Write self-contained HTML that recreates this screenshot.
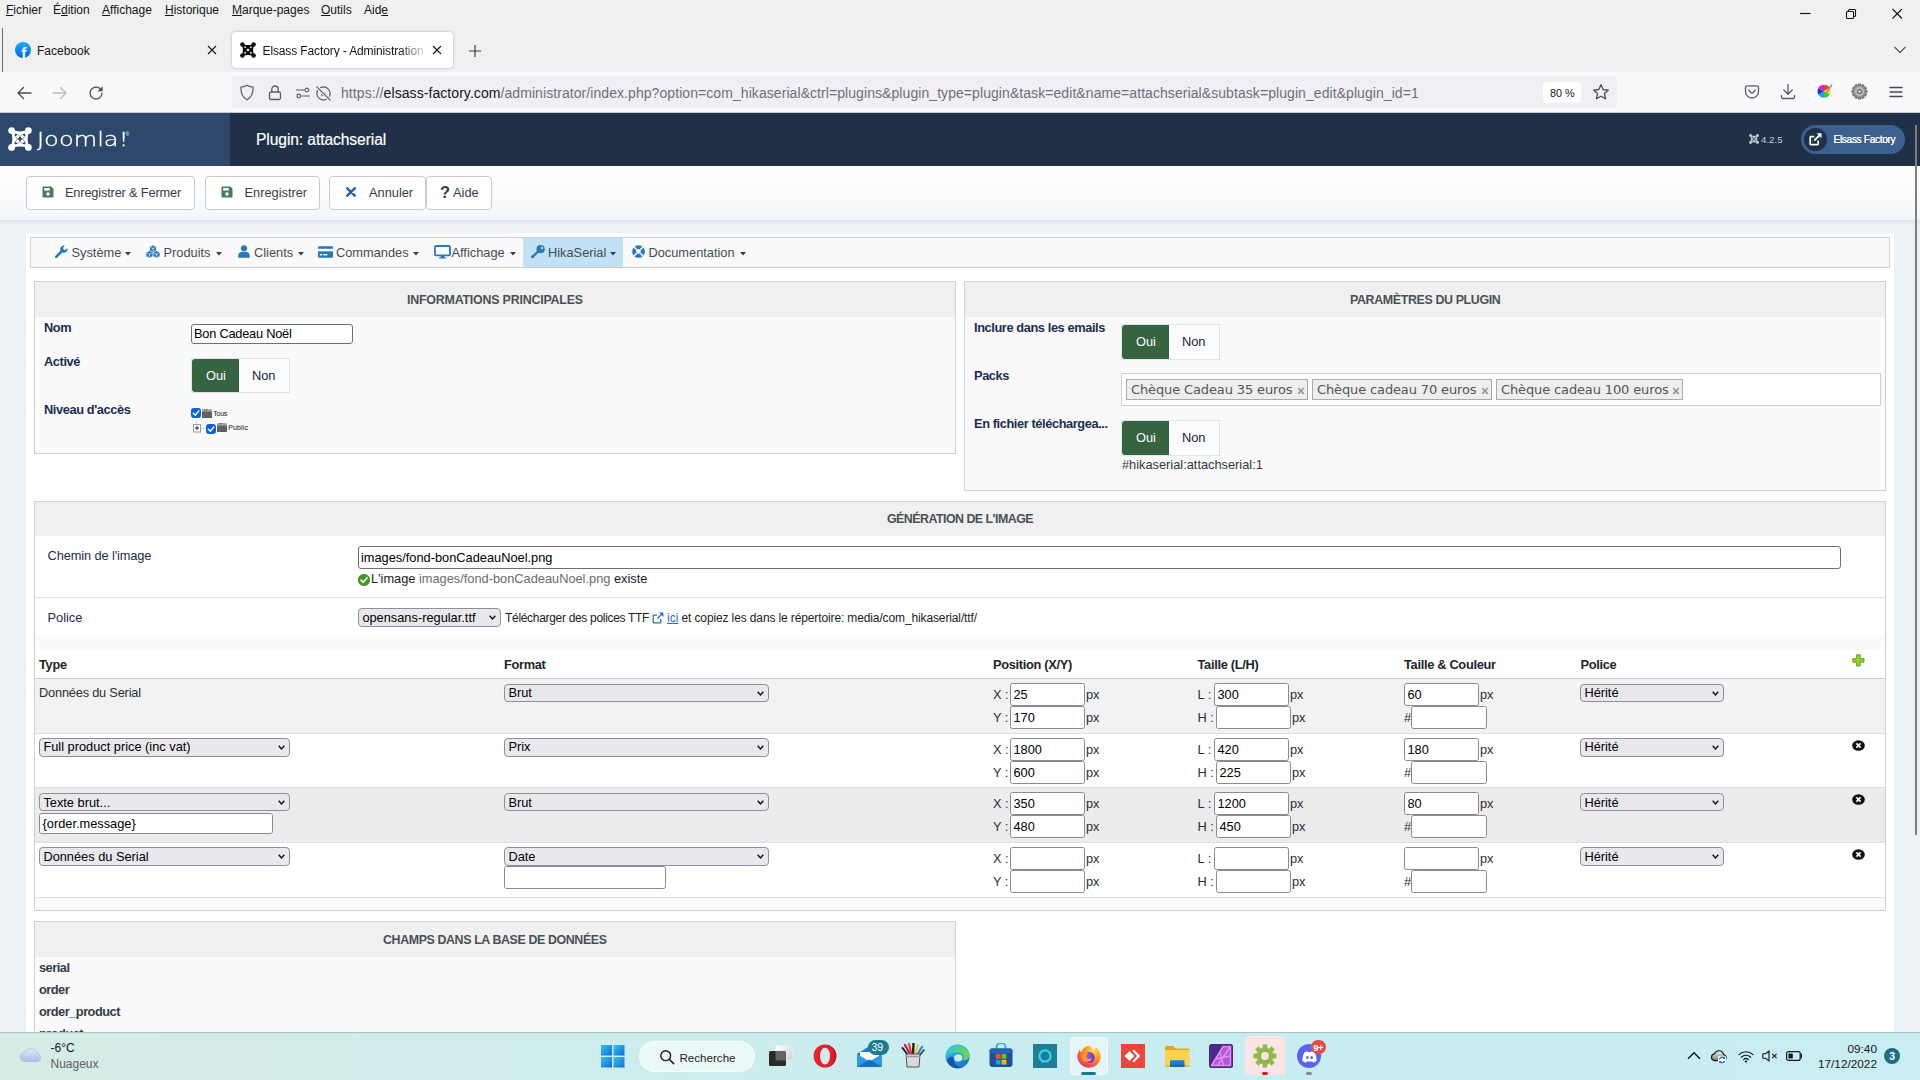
<!DOCTYPE html>
<html lang="fr"><head><meta charset="utf-8"><title>Elsass Factory - Administration</title>
<style>
*{box-sizing:border-box;margin:0;padding:0}
html,body{width:1920px;height:1080px;overflow:hidden;background:#fff}
body{position:relative;font-family:"Liberation Sans",sans-serif;font-size:12.8px;color:#212529}
.a{position:absolute;display:block}
.t{position:absolute;display:block;white-space:nowrap;line-height:1}
.inp{position:absolute;display:block;background:#fff;border:1px solid #8f8f9d;border-radius:2px;font-size:12.8px;line-height:1;white-space:nowrap;color:#000;overflow:hidden}
.sel{position:absolute;display:block;background:#e9e9ed;border:1px solid #8f8f9d;border-radius:4px;font-size:12.8px;line-height:1;white-space:nowrap;color:#000;overflow:hidden}
.u{text-decoration:underline;text-underline-offset:1px}
</style></head>
<body>
<div class="a" style="left:0px;top:0px;width:1920px;height:72px;background:#f0f0f0;"></div>
<div class="a" style="left:0px;top:72px;width:1920px;height:40px;background:#f9f9fb;"></div>
<div class="a" style="left:0px;top:112px;width:1920px;height:1px;background:#c9c9ce;"></div>
<div class="a" style="left:2px;top:28px;width:1px;height:44px;background:#6e6e6e;"></div>
<span class="t" style="top:4px;font-size:12px;color:#15141a;left:6px;"><span class="u">F</span>ichier</span>
<span class="t" style="top:4px;font-size:12px;color:#15141a;left:53px;">É<span class="u">d</span>ition</span>
<span class="t" style="top:4px;font-size:12px;color:#15141a;left:102px;"><span class="u">A</span>ffichage</span>
<span class="t" style="top:4px;font-size:12px;color:#15141a;left:165px;"><span class="u">H</span>istorique</span>
<span class="t" style="top:4px;font-size:12px;color:#15141a;left:232px;"><span class="u">M</span>arque-pages</span>
<span class="t" style="top:4px;font-size:12px;color:#15141a;left:321px;"><span class="u">O</span>utils</span>
<span class="t" style="top:4px;font-size:12px;color:#15141a;left:364px;">Aid<span class="u">e</span></span>
<svg class="a" style="left:1795px;top:4px;" width="20" height="20" viewBox="0 0 20 20"><path d="M5 9.5 H15.5" stroke="#111" stroke-width="1.1"/></svg>
<svg class="a" style="left:1841px;top:4px;" width="20" height="20" viewBox="0 0 20 20"><g fill="none" stroke="#111" stroke-width="1.1"><rect x="5.5" y="7.5" width="7" height="7" rx="1"/><path d="M7.5 7.5 V6.5 a1 1 0 0 1 1 -1 H13.5 a1 1 0 0 1 1 1 V11.5 a1 1 0 0 1 -1 1 H12.5"/></g></svg>
<svg class="a" style="left:1887px;top:4px;" width="20" height="20" viewBox="0 0 20 20"><path d="M5.5 5 L15 14.5 M15 5 L5.5 14.5" stroke="#111" stroke-width="1.1"/></svg>
<svg class="a" style="left:1892px;top:42px;" width="16" height="16" viewBox="0 0 16 16"><path d="M2.5 5 L8 10.5 L13.5 5" fill="none" stroke="#5b5b66" stroke-width="1.3"/></svg>
<svg class="a" style="left:15px;top:42px;" width="16" height="16" viewBox="0 0 16 16"><defs><linearGradient id="fbg" x1="0" y1="0" x2="0" y2="1"><stop offset="0" stop-color="#19afff"/><stop offset="1" stop-color="#0062e0"/></linearGradient></defs>
<circle cx="8" cy="8" r="8" fill="url(#fbg)"/><text x="6.2" y="15.6" font-family="Liberation Sans, sans-serif" font-weight="700" font-size="15.5" fill="#fff">f</text></svg>
<span class="t" style="top:45px;font-size:12px;color:#15141a;left:37px;">Facebook</span>
<svg class="a" style="left:206px;top:44px;" width="12" height="12" viewBox="0 0 12 12"><path d="M2 2 L10 10 M10 2 L2 10" stroke="#15141a" stroke-width="1.1"/></svg>
<div class="a" style="left:232px;top:32px;width:221px;height:36px;background:#fff;border-radius:4px;box-shadow:0 0 3px rgba(0,0,0,.28);"></div>
<svg class="a" style="left:240px;top:42px;" width="16" height="16" viewBox="0 0 24 24"><g fill="#0c0c0d"><circle cx="3.6" cy="3.6" r="3.4"/><circle cx="20.4" cy="3.6" r="3.4"/><circle cx="3.6" cy="20.4" r="3.4"/><circle cx="20.4" cy="20.4" r="3.4"/>
<path d="M5.5 3.6 Q12 5.2 18.5 3.6 L20.4 5.5 Q18.8 12 20.4 18.5 L18.5 20.4 Q12 18.8 5.5 20.4 L3.6 18.5 Q5.2 12 3.6 5.5 Z"/></g>
<g fill="#fff"><path d="M12 9.6 L14.4 12 L12 14.4 L9.6 12 Z"/>
<path d="M6.6 6.9 Q8.2 6.2 9.6 7.4 L7.4 9.6 Q6.2 8.4 6.6 6.9 Z"/><path d="M17.4 6.9 Q15.8 6.2 14.4 7.4 L16.6 9.6 Q17.8 8.4 17.4 6.9 Z"/>
<path d="M6.6 17.1 Q8.2 17.8 9.6 16.6 L7.4 14.4 Q6.2 15.6 6.6 17.1 Z"/><path d="M17.4 17.1 Q15.8 17.8 14.4 16.6 L16.6 14.4 Q17.8 15.6 17.4 17.1 Z"/></g>
<g stroke="#fff" stroke-width="0" fill="none"><path d="M9.6 7.4 L12 9.6 M14.4 12 L16.6 14.4 M14.4 7.4 L12 9.6 M9.6 12 L7.4 14.4 M16.6 9.6 L14.4 12 M12 14.4 L9.6 16.6 M7.4 9.6 L9.6 12 M12 14.4 L14.4 16.6"/></g></svg>
<span class="t" style="top:45px;font-size:12px;color:#15141a;left:262.5px;letter-spacing:-0.12px;"><span style="display:block;width:166px;overflow:hidden;-webkit-mask-image:linear-gradient(to right,#000 82%,transparent 100%);mask-image:linear-gradient(to right,#000 82%,transparent 100%)">Elsass Factory - Administration - Plugin</span></span>
<svg class="a" style="left:431px;top:44px;" width="12" height="12" viewBox="0 0 12 12"><path d="M2 2 L10 10 M10 2 L2 10" stroke="#15141a" stroke-width="1.1"/></svg>
<svg class="a" style="left:467px;top:43px;" width="16" height="16" viewBox="0 0 16 16"><path d="M8 2 V14 M2 8 H14" stroke="#3a3a40" stroke-width="1.2"/></svg>
<svg class="a" style="left:16px;top:85px;" width="16" height="16" viewBox="0 0 16 16"><path d="M15 8 H2 M7.5 2.5 L2 8 L7.5 13.5" fill="none" stroke="#4a4a50" stroke-width="1.3" stroke-linecap="round" stroke-linejoin="round"/></svg>
<svg class="a" style="left:52px;top:85px;" width="16" height="16" viewBox="0 0 16 16"><path d="M1 8 H14 M8.5 2.5 L14 8 L8.5 13.5" fill="none" stroke="#bdbdc2" stroke-width="1.3" stroke-linecap="round" stroke-linejoin="round"/></svg>
<svg class="a" style="left:88px;top:85px;" width="16" height="16" viewBox="0 0 16 16"><path d="M14 8.2 A6 6 0 1 1 11.6 3.3" fill="none" stroke="#4a4a50" stroke-width="1.3" stroke-linecap="round"/><path d="M14.6 1.2 V6.2 H9.6 Z" fill="#4a4a50"/></svg>
<div class="a" style="left:232px;top:76px;width:1385px;height:32px;background:#f0f0f4;border-radius:4px;"></div>
<svg class="a" style="left:239px;top:84px;" width="16" height="17" viewBox="0 0 16 17"><path d="M8 1.2 C5.8 2.6 3.7 3 1.8 3 C1.8 9.5 3.5 13.5 8 15.8 C12.5 13.5 14.2 9.5 14.2 3 C12.3 3 10.2 2.6 8 1.2 Z" fill="none" stroke="#5b5b66" stroke-width="1.2" stroke-linejoin="round"/></svg>
<svg class="a" style="left:267px;top:84px;" width="16" height="17" viewBox="0 0 16 17"><g fill="none" stroke="#5b5b66" stroke-width="1.3"><rect x="2.5" y="8" width="11" height="7.5" rx="1.5"/><path d="M4.8 8 V5.2 a3.2 3.2 0 0 1 6.4 0 V8"/></g></svg>
<svg class="a" style="left:295px;top:85.5px;" width="16" height="14" viewBox="0 0 16 14"><g fill="none" stroke="#5b5b66" stroke-width="1.2" stroke-linecap="round"><path d="M1.5 4 H9"/><circle cx="11.8" cy="4" r="1.8"/><path d="M7 10 H14.5"/><circle cx="3.8" cy="10" r="1.8"/></g></svg>
<svg class="a" style="left:315px;top:84.5px;" width="17" height="17" viewBox="0 0 17 17"><g fill="none" stroke="#5b5b66" stroke-width="1.2"><circle cx="8.5" cy="8.5" r="6.6"/><path d="M6.4 5.4 L11.6 8.5 L6.4 11.6 Z" fill="#5b5b66" stroke="none"/><path d="M1.5 1.5 L15.5 15.5" stroke="#f0f0f4" stroke-width="3.2"/><path d="M1.8 1.8 L15.2 15.2" stroke-linecap="round"/></g></svg>
<span class="t url" style="top:86px;font-size:14px;color:#212529;left:341px;letter-spacing:0.07px;"><span style="color:#6f6f78">https://</span><span style="color:#15141a">elsass-factory.com</span><span style="color:#6f6f78">/administrator/index.php?option=com_hikaserial&amp;ctrl=plugins&amp;plugin_type=plugin&amp;task=edit&amp;name=attachserial&amp;subtask=plugin_edit&amp;plugin_id=1</span></span>
<div class="a" style="left:1543px;top:82px;width:38px;height:21px;background:#fff;border-radius:3px;"></div>
<span class="t" style="top:88px;font-size:10.8px;color:#15141a;left:1550px;">80 %</span>
<svg class="a" style="left:1592px;top:83px;" width="18" height="18" viewBox="0 0 18 18"><path d="M9 1.8 L11.2 6.5 L16.3 7.1 L12.5 10.6 L13.6 15.8 L9 13.2 L4.4 15.8 L5.5 10.6 L1.7 7.1 L6.8 6.5 Z" fill="none" stroke="#4a4a50" stroke-width="1.3" stroke-linejoin="round"/></svg>
<svg class="a" style="left:1744px;top:84px;" width="16" height="16" viewBox="0 0 16 16"><g fill="none" stroke="#5b5b66" stroke-width="1.3" stroke-linecap="round" stroke-linejoin="round"><path d="M1.5 3.5 a1.6 1.6 0 0 1 1.6 -1.6 H12.9 a1.6 1.6 0 0 1 1.6 1.6 V7.5 a6.5 6.5 0 0 1 -13 0 Z"/><path d="M4.8 6.3 L8 9.4 L11.2 6.3"/></g></svg>
<svg class="a" style="left:1780px;top:83px;" width="16" height="17" viewBox="0 0 16 17"><g fill="none" stroke="#5b5b66" stroke-width="1.3" stroke-linecap="round" stroke-linejoin="round"><path d="M8 1.5 V11 M3.8 7 L8 11.2 L12.2 7"/><path d="M1.5 12.5 V14 a1.5 1.5 0 0 0 1.5 1.5 H13 a1.5 1.5 0 0 0 1.5 -1.5 V12.5"/></g></svg>
<svg class="a" style="left:1817px;top:84px;" width="16" height="15" viewBox="0 0 16 15"><g transform="translate(7 7.2)"><path d="M0 0 L0 -6.5 A6.5 6.5 0 0 1 5.63 -3.25 Z" fill="#ff3b30"/><path d="M0 0 L5.63 -3.25 A6.5 6.5 0 0 1 5.63 3.25 Z" fill="#ffd500"/><path d="M0 0 L5.63 3.25 A6.5 6.5 0 0 1 0 6.5 Z" fill="#2bd12b"/><path d="M0 0 L0 6.5 A6.5 6.5 0 0 1 -5.63 3.25 Z" fill="#0aa6e8"/><path d="M0 0 L-5.63 3.25 A6.5 6.5 0 0 1 -5.63 -3.25 Z" fill="#2433d6"/><path d="M0 0 L-5.63 -3.25 A6.5 6.5 0 0 1 0 -6.5 Z" fill="#e020c8"/></g><path d="M14.6 1 L9 9.5" stroke="#9a9a7a" stroke-width="1.6" stroke-linecap="round"/></svg>
<svg class="a" style="left:1851px;top:83px;" width="17" height="17" viewBox="0 0 17 17"><g transform="translate(8.5 8.5)"><g fill="#777"><rect x="-1.6" y="-8" width="3.2" height="4" rx=".6" transform="rotate(0)"/><rect x="-1.6" y="-8" width="3.2" height="4" rx=".6" transform="rotate(30)"/><rect x="-1.6" y="-8" width="3.2" height="4" rx=".6" transform="rotate(60)"/><rect x="-1.6" y="-8" width="3.2" height="4" rx=".6" transform="rotate(90)"/><rect x="-1.6" y="-8" width="3.2" height="4" rx=".6" transform="rotate(120)"/><rect x="-1.6" y="-8" width="3.2" height="4" rx=".6" transform="rotate(150)"/><rect x="-1.6" y="-8" width="3.2" height="4" rx=".6" transform="rotate(180)"/><rect x="-1.6" y="-8" width="3.2" height="4" rx=".6" transform="rotate(210)"/><rect x="-1.6" y="-8" width="3.2" height="4" rx=".6" transform="rotate(240)"/><rect x="-1.6" y="-8" width="3.2" height="4" rx=".6" transform="rotate(270)"/><rect x="-1.6" y="-8" width="3.2" height="4" rx=".6" transform="rotate(300)"/><rect x="-1.6" y="-8" width="3.2" height="4" rx=".6" transform="rotate(330)"/></g><circle r="6.3" fill="#8f8f8f"/><circle r="4.7" fill="#b9b9b9"/><circle r="2.6" fill="#6f6f6f"/><circle r="1.3" fill="#e0e0e0"/></g></svg>
<svg class="a" style="left:1888px;top:84px;" width="16" height="16" viewBox="0 0 16 16"><path d="M2 3.5 H14 M2 8 H14 M2 12.5 H14" stroke="#4a4a50" stroke-width="1.3" stroke-linecap="round"/></svg>
<div class="a" style="left:0px;top:113px;width:1920px;height:919px;background:#ecf1f6;"></div>
<div class="a" style="left:0px;top:113px;width:1920px;height:53px;background:#1f3047;"></div>
<div class="a" style="left:0px;top:113px;width:230px;height:53px;background:#2e486b;"></div>
<svg class="a" style="left:8px;top:127px;" width="24" height="24" viewBox="0 0 24 24"><g fill="#fff"><circle cx="3.6" cy="3.6" r="3.4"/><circle cx="20.4" cy="3.6" r="3.4"/><circle cx="3.6" cy="20.4" r="3.4"/><circle cx="20.4" cy="20.4" r="3.4"/>
<path d="M5.5 3.6 Q12 5.2 18.5 3.6 L20.4 5.5 Q18.8 12 20.4 18.5 L18.5 20.4 Q12 18.8 5.5 20.4 L3.6 18.5 Q5.2 12 3.6 5.5 Z"/></g>
<g fill="#2e486b"><path d="M12 9.6 L14.4 12 L12 14.4 L9.6 12 Z"/>
<path d="M6.6 6.9 Q8.2 6.2 9.6 7.4 L7.4 9.6 Q6.2 8.4 6.6 6.9 Z"/><path d="M17.4 6.9 Q15.8 6.2 14.4 7.4 L16.6 9.6 Q17.8 8.4 17.4 6.9 Z"/>
<path d="M6.6 17.1 Q8.2 17.8 9.6 16.6 L7.4 14.4 Q6.2 15.6 6.6 17.1 Z"/><path d="M17.4 17.1 Q15.8 17.8 14.4 16.6 L16.6 14.4 Q17.8 15.6 17.4 17.1 Z"/></g>
<g stroke="#2e486b" stroke-width="0.55" fill="none"><path d="M9.6 7.4 L12 9.6 M14.4 12 L16.6 14.4 M14.4 7.4 L12 9.6 M9.6 12 L7.4 14.4 M16.6 9.6 L14.4 12 M12 14.4 L9.6 16.6 M7.4 9.6 L9.6 12 M12 14.4 L14.4 16.6"/></g></svg>
<span class="t" style="top:130px;font-size:19px;color:#fff;left:37px;font-weight:200;font-family:'DejaVu Sans Light','DejaVu Sans',sans-serif;transform:scaleX(1.27);transform-origin:0 0;-webkit-text-stroke:.35px #fff;">Joomla!</span>
<span class="t" style="top:132px;font-size:5px;color:#fff;left:125.5px;">®</span>
<span class="t m" style="top:132px;font-size:15.6px;color:#fff;left:256px;letter-spacing:-0.08px;-webkit-text-stroke:.2px #fff;">Plugin: attachserial</span>
<svg class="a" style="left:1749px;top:134px;" width="10" height="10" viewBox="0 0 24 24"><g fill="#c5cbd6"><circle cx="3.6" cy="3.6" r="3.4"/><circle cx="20.4" cy="3.6" r="3.4"/><circle cx="3.6" cy="20.4" r="3.4"/><circle cx="20.4" cy="20.4" r="3.4"/>
<path d="M5.5 3.6 Q12 5.2 18.5 3.6 L20.4 5.5 Q18.8 12 20.4 18.5 L18.5 20.4 Q12 18.8 5.5 20.4 L3.6 18.5 Q5.2 12 3.6 5.5 Z"/></g>
<g fill="#1f3047"><path d="M12 9.6 L14.4 12 L12 14.4 L9.6 12 Z"/>
<path d="M6.6 6.9 Q8.2 6.2 9.6 7.4 L7.4 9.6 Q6.2 8.4 6.6 6.9 Z"/><path d="M17.4 6.9 Q15.8 6.2 14.4 7.4 L16.6 9.6 Q17.8 8.4 17.4 6.9 Z"/>
<path d="M6.6 17.1 Q8.2 17.8 9.6 16.6 L7.4 14.4 Q6.2 15.6 6.6 17.1 Z"/><path d="M17.4 17.1 Q15.8 17.8 14.4 16.6 L16.6 14.4 Q17.8 15.6 17.4 17.1 Z"/></g>
<g stroke="#1f3047" stroke-width="0.55" fill="none"><path d="M9.6 7.4 L12 9.6 M14.4 12 L16.6 14.4 M14.4 7.4 L12 9.6 M9.6 12 L7.4 14.4 M16.6 9.6 L14.4 12 M12 14.4 L9.6 16.6 M7.4 9.6 L9.6 12 M12 14.4 L14.4 16.6"/></g></svg>
<span class="t m" style="top:135px;font-size:9.7px;color:#c5cbd6;left:1761px;">4.2.5</span>
<div class="a" style="left:1801px;top:125px;width:104px;height:29px;background:#3d618f;border-radius:15px;"></div>
<div class="a" style="left:1804px;top:128px;width:23px;height:23px;background:#1f3047;border-radius:50%;"></div>
<svg class="a" style="left:1809px;top:133px;" width="13" height="13" viewBox="0 0 13 13"><g fill="none" stroke="#fff" stroke-width="1.7"><path d="M9.2 7.5 V11 a.6 .6 0 0 1 -.6 .6 H1.8 a.6 .6 0 0 1 -.6 -.6 V4.2 a.6 .6 0 0 1 .6 -.6 H5.3"/><path d="M5.2 7.6 L11.6 1.2" stroke-width="1.9"/></g><path d="M7.6 0.3 H12.5 V5.2 Z" fill="#fff"/></svg>
<span class="t m" style="top:135px;font-size:10.2px;color:#fff;left:1833.5px;letter-spacing:-0.36px;text-shadow:0 0 .4px #fff;">Elsass Factory</span>
<div class="a" style="left:0px;top:166px;width:1920px;height:54px;background:linear-gradient(to bottom,#ffffff 0%,#fbfcfd 45%,#f4f7fa 100%);box-shadow:0 1px 5px rgba(46,72,107,.13);"></div>
<div class="a" style="left:26px;top:176px;width:169px;height:34px;background:#fff;border:1px solid #c4ccd9;border-radius:4px;"></div>
<svg class="a" style="left:41.6px;top:186px;" width="12" height="12" viewBox="0 0 12 12"><path d="M1.2 0.5 H9.3 L11.5 2.7 V10.8 a.7 .7 0 0 1 -.7 .7 H1.2 a.7 .7 0 0 1 -.7 -.7 V1.2 a.7 .7 0 0 1 .7 -.7 Z" fill="#457d54"/><rect x="2.2" y="2" width="5.6" height="2.6" fill="#fff"/><circle cx="6" cy="8" r="1.7" fill="#fff"/></svg>
<span class="t m" style="top:187px;font-size:12.8px;color:#353d4a;left:65px;letter-spacing:-0.17px;">Enregistrer &amp; Fermer</span>
<div class="a" style="left:205px;top:176px;width:115px;height:34px;background:#fff;border:1px solid #c4ccd9;border-radius:4px;"></div>
<svg class="a" style="left:220.6px;top:186px;" width="12" height="12" viewBox="0 0 12 12"><path d="M1.2 0.5 H9.3 L11.5 2.7 V10.8 a.7 .7 0 0 1 -.7 .7 H1.2 a.7 .7 0 0 1 -.7 -.7 V1.2 a.7 .7 0 0 1 .7 -.7 Z" fill="#457d54"/><rect x="2.2" y="2" width="5.6" height="2.6" fill="#fff"/><circle cx="6" cy="8" r="1.7" fill="#fff"/></svg>
<span class="t m" style="top:187px;font-size:12.8px;color:#353d4a;left:244.5px;">Enregistrer</span>
<div class="a" style="left:329px;top:176px;width:97px;height:34px;background:#fff;border:1px solid #c4ccd9;border-radius:4px;"></div>
<svg class="a" style="left:346px;top:187px;" width="10" height="10" viewBox="0 0 10 10"><path d="M1.3 1.3 L8.7 8.7 M8.7 1.3 L1.3 8.7" stroke="#2a5fb4" stroke-width="2.5" stroke-linecap="round"/></svg>
<span class="t m" style="top:187px;font-size:12.8px;color:#353d4a;left:369px;">Annuler</span>
<div class="a" style="left:426px;top:176px;width:66px;height:34px;background:#fff;border:1px solid #c4ccd9;border-radius:4px;"></div>
<span class="t" style="top:184px;font-size:16.5px;color:#353d4a;left:440px;font-weight:700;">?</span>
<span class="t m" style="top:187px;font-size:12.8px;color:#353d4a;left:453px;">Aide</span>
<div class="a" style="left:26px;top:233px;width:1868px;height:799px;background:#fff;"></div>
<div class="a" style="left:30px;top:237px;width:1860px;height:31px;background:#fafafa;border:1px solid #cfcfcf;"></div>
<div class="a" style="left:523px;top:238px;width:100px;height:29px;background:#c3e1f4;"></div>
<svg class="a" style="left:54.5px;top:245px;" width="13" height="13" viewBox="0 0 13 13"><path d="M1.2 11.8 L7 6" stroke="#2878bd" stroke-width="2.6" stroke-linecap="round"/><path d="M12.4 3.2 A3.7 3.7 0 1 1 9.8 .6 L8 2.9 L8.6 4.4 L10.1 5 Z" fill="#2878bd"/></svg>
<span class="t m" style="top:247px;font-size:12.8px;color:#444c56;left:71.5px;">Système</span>
<svg class="a" style="left:125px;top:252px;" width="6" height="4" viewBox="0 0 6 4"><path d="M0 0 H6 L3 3.4 Z" fill="#3a3f45"/></svg>
<svg class="a" style="left:146px;top:245px;" width="14" height="13" viewBox="0 0 14 13"><path d="M7 0.30000000000000027 L10.1 1.9000000000000001 V5.5 L7 7.1 L3.9 5.5 V1.9000000000000001 Z" fill="#2878bd"/><path d="M4.7 2.4000000000000004 L7 3.6 L9.3 2.4000000000000004 M7 3.6 V6.2" stroke="#fafafa" stroke-width=".7" fill="none"/><path d="M3.5 6.000000000000001 L6.6 7.6000000000000005 V11.200000000000001 L3.5 12.8 L0.3999999999999999 11.200000000000001 V7.6000000000000005 Z" fill="#2878bd"/><path d="M1.2000000000000002 8.100000000000001 L3.5 9.3 L5.8 8.100000000000001 M3.5 9.3 V11.9" stroke="#fafafa" stroke-width=".7" fill="none"/><path d="M10.5 6.000000000000001 L13.6 7.6000000000000005 V11.200000000000001 L10.5 12.8 L7.4 11.200000000000001 V7.6000000000000005 Z" fill="#2878bd"/><path d="M8.2 8.100000000000001 L10.5 9.3 L12.8 8.100000000000001 M10.5 9.3 V11.9" stroke="#fafafa" stroke-width=".7" fill="none"/></svg>
<span class="t m" style="top:247px;font-size:12.8px;color:#444c56;left:163.5px;">Produits</span>
<svg class="a" style="left:216px;top:252px;" width="6" height="4" viewBox="0 0 6 4"><path d="M0 0 H6 L3 3.4 Z" fill="#3a3f45"/></svg>
<svg class="a" style="left:237.5px;top:245px;" width="12" height="13" viewBox="0 0 12 13"><circle cx="6" cy="3.3" r="3.1" fill="#2878bd"/><path d="M0.3 12.8 V10.6 a3.6 3.6 0 0 1 3.6 -3.6 H8.1 a3.6 3.6 0 0 1 3.6 3.6 V12.8 Z" fill="#2878bd"/></svg>
<span class="t m" style="top:247px;font-size:12.8px;color:#444c56;left:254px;">Clients</span>
<svg class="a" style="left:298px;top:252px;" width="6" height="4" viewBox="0 0 6 4"><path d="M0 0 H6 L3 3.4 Z" fill="#3a3f45"/></svg>
<svg class="a" style="left:318px;top:246px;" width="15" height="12" viewBox="0 0 15 12"><rect x="0" y="0.3" width="15" height="11.4" rx="1.3" fill="#2878bd"/><rect x="0" y="2.8" width="15" height="2.5" fill="#fafafa"/><rect x="1.8" y="8" width="2.5" height="1.4" fill="#fafafa"/><rect x="5.3" y="8" width="4" height="1.4" fill="#fafafa"/></svg>
<span class="t m" style="top:247px;font-size:12.8px;color:#444c56;left:336px;">Commandes</span>
<svg class="a" style="left:413px;top:252px;" width="6" height="4" viewBox="0 0 6 4"><path d="M0 0 H6 L3 3.4 Z" fill="#3a3f45"/></svg>
<svg class="a" style="left:433.5px;top:245px;" width="17" height="14" viewBox="0 0 17 14"><rect x="1" y="1" width="15" height="9.3" rx="1" fill="none" stroke="#2878bd" stroke-width="1.8"/><path d="M7 10.5 L6.4 12.4 H4.7 V13.6 H12.3 V12.4 H10.6 L10 10.5 Z" fill="#2878bd"/></svg>
<span class="t m" style="top:247px;font-size:12.8px;color:#444c56;left:451.5px;">Affichage</span>
<svg class="a" style="left:510px;top:252px;" width="6" height="4" viewBox="0 0 6 4"><path d="M0 0 H6 L3 3.4 Z" fill="#3a3f45"/></svg>
<svg class="a" style="left:531px;top:245px;" width="14" height="13" viewBox="0 0 14 13"><circle cx="9.6" cy="4.2" r="4.1" fill="#2878bd"/><circle cx="10.9" cy="2.9" r="1.2" fill="#c3e1f4"/><path d="M7.2 6.4 L1 12.4" stroke="#2878bd" stroke-width="2.3" /><path d="M0.2 10.6 L3.2 10.2 L2.6 13 H0.2 Z" fill="#2878bd"/></svg>
<span class="t m" style="top:247px;font-size:12.8px;color:#444c56;left:548px;">HikaSerial</span>
<svg class="a" style="left:610px;top:252px;" width="6" height="4" viewBox="0 0 6 4"><path d="M0 0 H6 L3 3.4 Z" fill="#3a3f45"/></svg>
<svg class="a" style="left:631.5px;top:245px;" width="13" height="13" viewBox="0 0 13 13"><circle cx="6.5" cy="6.5" r="4.4" fill="none" stroke="#2878bd" stroke-width="3.9"/><path d="M2 2 L4.6 4.6 M11 2 L8.4 4.6 M2 11 L4.6 8.4 M11 11 L8.4 8.4" stroke="#fafafa" stroke-width="1.5"/></svg>
<span class="t m" style="top:247px;font-size:12.8px;color:#444c56;left:648.5px;">Documentation</span>
<svg class="a" style="left:740px;top:252px;" width="6" height="4" viewBox="0 0 6 4"><path d="M0 0 H6 L3 3.4 Z" fill="#3a3f45"/></svg>
<div class="a" style="left:1915px;top:125px;width:2px;height:710px;background:#7f7f7f;"></div>
<div class="a" style="left:34px;top:281px;width:922px;height:173px;background:#fafafa;border:1px solid #d0d0d0;"></div>
<div class="a" style="left:35px;top:282px;width:920px;height:35px;background:#f0f0f0;"></div>
<span class="t pt" style="top:294px;font-size:12.4px;color:#495057;left:407px;font-weight:700;letter-spacing:-0.2px;">INFORMATIONS PRINCIPALES</span>
<span class="t lb" style="top:322px;font-size:12.8px;color:#1c2d50;left:44px;font-weight:700;letter-spacing:-0.4px;">Nom</span>
<div class="a" style="left:191px;top:324px;width:162px;height:20px;background:#fff;border:1px solid #6f6f7a;border-radius:3px;"></div>
<span class="t it" style="top:328px;font-size:12.8px;color:#000;left:194px;letter-spacing:-0.23px;">Bon Cadeau Noël</span>
<span class="t lb" style="top:356px;font-size:12.8px;color:#1c2d50;left:44px;font-weight:700;letter-spacing:-0.4px;">Activé</span>
<div class="a" style="left:191px;top:358px;width:99px;height:35px;background:#fbfcfd;border:1px solid #dde3ea;"></div>
<div class="a" style="left:192px;top:359px;width:47px;height:33px;background:#366441;border-radius:3px 0 0 3px;"></div>
<span class="t sw" style="top:370px;font-size:12.8px;color:#fff;left:206px;">Oui</span>
<span class="t sw" style="top:370px;font-size:12.8px;color:#1b2233;left:252px;">Non</span>
<span class="t lb" style="top:404px;font-size:12.8px;color:#1c2d50;left:44px;font-weight:700;letter-spacing:-0.4px;">Niveau d'accès</span>
<svg class="a" style="left:191px;top:408px;" width="10" height="10" viewBox="0 0 10 10"><rect x=".5" y=".5" width="9" height="9" rx="2" fill="#0a63e0" stroke="#0a5fd8" stroke-width="1"/><path d="M2.3 5.2 L4.3 7.2 L7.8 2.9" fill="none" stroke="#fff" stroke-width="1.5" stroke-linecap="round" stroke-linejoin="round"/></svg>
<svg class="a" style="left:202px;top:409px;" width="10" height="9" viewBox="0 0 10 9"><path d="M0 .9 H10 V9 H0 Z" fill="#616161"/><path d="M0 .3 H10 V2.6 H0 Z" fill="#a2a2a2"/><path d="M2 .6 H6" stroke="#5a5a5a" stroke-width=".7"/></svg>
<span class="t" style="top:410px;font-size:7px;color:#111;left:213.3px;letter-spacing:-0.25px;">Tous</span>
<svg class="a" style="left:191px;top:419px;" width="16" height="15" viewBox="0 0 16 15"><path d="M5.5 2.5 V5 M9.5 9.5 H14" stroke="#cfcfcf" stroke-width="1"/><rect x="2.5" y="5.5" width="7" height="7.5" fill="#fff" stroke="#9a9a9a" stroke-width="1"/><path d="M4 9 H8 M6 7 V11" stroke="#222" stroke-width="1"/></svg>
<svg class="a" style="left:205.5px;top:423.5px;" width="10" height="10" viewBox="0 0 10 10"><rect x=".5" y=".5" width="9" height="9" rx="2" fill="#0a63e0" stroke="#0a5fd8" stroke-width="1"/><path d="M2.3 5.2 L4.3 7.2 L7.8 2.9" fill="none" stroke="#fff" stroke-width="1.5" stroke-linecap="round" stroke-linejoin="round"/></svg>
<svg class="a" style="left:217px;top:423px;" width="10" height="9" viewBox="0 0 10 9"><path d="M0 .9 H10 V9 H0 Z" fill="#616161"/><path d="M0 .3 H10 V2.6 H0 Z" fill="#a2a2a2"/><path d="M2 .6 H6" stroke="#5a5a5a" stroke-width=".7"/></svg>
<span class="t" style="top:424px;font-size:7px;color:#111;left:228.2px;letter-spacing:0.15px;">Public</span>
<div class="a" style="left:964px;top:281px;width:922px;height:210px;background:#fafafa;border:1px solid #d0d0d0;"></div>
<div class="a" style="left:965px;top:282px;width:920px;height:35px;background:#f0f0f0;"></div>
<span class="t pt" style="top:294px;font-size:12.4px;color:#495057;left:1350px;font-weight:700;letter-spacing:-0.35px;">PARAMÈTRES DU PLUGIN</span>
<span class="t lb" style="top:322px;font-size:12.8px;color:#1c2d50;left:974px;font-weight:700;letter-spacing:-0.4px;">Inclure dans les emails</span>
<div class="a" style="left:1121px;top:324px;width:99px;height:36px;background:#fbfcfd;border:1px solid #dde3ea;"></div>
<div class="a" style="left:1122px;top:325px;width:47px;height:34px;background:#366441;border-radius:3px 0 0 3px;"></div>
<span class="t sw" style="top:336px;font-size:12.8px;color:#fff;left:1136px;">Oui</span>
<span class="t sw" style="top:336px;font-size:12.8px;color:#1b2233;left:1182px;">Non</span>
<span class="t lb" style="top:370px;font-size:12.8px;color:#1c2d50;left:974px;font-weight:700;letter-spacing:-0.4px;">Packs</span>
<div class="a" style="left:1121px;top:373px;width:760px;height:33px;background:#fff;border:1px solid #cfcfcf;"></div>
<div class="a" style="left:1126px;top:379px;width:182px;height:21px;background:#eeeeee;border:1px solid #aaaaaa;"></div>
<span class="t tg" style="top:383px;font-size:13px;color:#555;left:1131px;letter-spacing:-0.13px;font-family:'DejaVu Sans',sans-serif;">Chèque Cadeau 35 euros</span>
<svg class="a" style="left:1296.5px;top:386.5px;" width="8" height="8" viewBox="0 0 8 8"><path d="M1.2 1.2 L6.8 6.8 M6.8 1.2 L1.2 6.8" stroke="#9a9a9a" stroke-width="1.8"/></svg>
<div class="a" style="left:1312px;top:379px;width:180px;height:21px;background:#eeeeee;border:1px solid #aaaaaa;"></div>
<span class="t tg" style="top:383px;font-size:13px;color:#555;left:1317px;letter-spacing:-0.13px;font-family:'DejaVu Sans',sans-serif;">Chèque cadeau 70 euros</span>
<svg class="a" style="left:1480.5px;top:386.5px;" width="8" height="8" viewBox="0 0 8 8"><path d="M1.2 1.2 L6.8 6.8 M6.8 1.2 L1.2 6.8" stroke="#9a9a9a" stroke-width="1.8"/></svg>
<div class="a" style="left:1496px;top:379px;width:187px;height:21px;background:#eeeeee;border:1px solid #aaaaaa;"></div>
<span class="t tg" style="top:383px;font-size:13px;color:#555;left:1501px;letter-spacing:-0.13px;font-family:'DejaVu Sans',sans-serif;">Chèque cadeau 100 euros</span>
<svg class="a" style="left:1671.5px;top:386.5px;" width="8" height="8" viewBox="0 0 8 8"><path d="M1.2 1.2 L6.8 6.8 M6.8 1.2 L1.2 6.8" stroke="#9a9a9a" stroke-width="1.8"/></svg>
<span class="t lb" style="top:418px;font-size:12.8px;color:#1c2d50;left:974px;font-weight:700;letter-spacing:-0.4px;">En fichier téléchargea...</span>
<div class="a" style="left:1121px;top:420px;width:99px;height:36px;background:#fbfcfd;border:1px solid #dde3ea;"></div>
<div class="a" style="left:1122px;top:421px;width:47px;height:34px;background:#366441;border-radius:3px 0 0 3px;"></div>
<span class="t sw" style="top:432px;font-size:12.8px;color:#fff;left:1136px;">Oui</span>
<span class="t sw" style="top:432px;font-size:12.8px;color:#1b2233;left:1182px;">Non</span>
<span class="t hs" style="top:459px;font-size:12.8px;color:#33373c;left:1122px;">#hikaserial:attachserial:1</span>
<div class="a" style="left:34px;top:501px;width:1852px;height:410px;background:#fafafa;border:1px solid #d0d0d0;"></div>
<div class="a" style="left:35px;top:502px;width:1850px;height:34px;background:#f0f0f0;"></div>
<span class="t pt" style="top:513px;font-size:12.4px;color:#495057;left:887px;font-weight:700;letter-spacing:-0.52px;">GÉNÉRATION DE L'IMAGE</span>
<div class="a" style="left:35px;top:536px;width:1850px;height:61px;background:#fff;"></div>
<div class="a" style="left:35px;top:597px;width:1850px;height:1px;background:#dee2e6;"></div>
<span class="t rl" style="top:550px;font-size:12.8px;color:#1c2d50;left:47.5px;letter-spacing:-0.1px;">Chemin de l'image</span>
<div class="a" style="left:358px;top:546px;width:1483px;height:23px;background:#fff;border:1px solid #6f6f7a;border-radius:3px;"></div>
<span class="t it2" style="top:552px;font-size:12.8px;color:#000;left:361px;">images/fond-bonCadeauNoel.png</span>
<svg class="a" style="left:358px;top:573.5px;" width="12" height="12" viewBox="0 0 12 12"><circle cx="6" cy="6" r="5.8" fill="#3f9b1f"/><circle cx="6" cy="6" r="5.8" fill="none" stroke="#2c7a12" stroke-width=".6"/><path d="M3 6.2 L5.2 8.3 L9 3.9" fill="none" stroke="#fff" stroke-width="1.7" stroke-linecap="round" stroke-linejoin="round"/></svg>
<span class="t ex" style="top:573px;font-size:12.8px;color:#1d2126;left:371px;">L'image <span style="color:#6b6b6b">images/fond-bonCadeauNoel.png</span> existe</span>
<div class="a" style="left:35px;top:598px;width:1850px;height:39px;background:#fff;"></div>
<span class="t rl" style="top:612px;font-size:12.8px;color:#1c2d50;left:47.5px;">Police</span>
<div class="a" style="left:358px;top:608px;width:143px;height:19px;background:#e9e9ed;border:1px solid #8f8f9d;border-radius:4px;"></div>
<span class="t st" style="top:612px;font-size:12.8px;color:#000;left:362.4px;">opensans-regular.ttf</span>
<svg class="a" style="left:489px;top:615.0px;" width="7" height="5" viewBox="0 0 7 5"><path d="M.7 .8 L3.5 3.9 L6.3 .8" fill="none" stroke="#111" stroke-width="1.45"/></svg>
<span class="t dl" style="top:612px;font-size:12px;color:#1d2126;left:505px;letter-spacing:-0.31px;">Télécharger des polices TTF</span>
<svg class="a" style="left:652px;top:612px;" width="12" height="12" viewBox="0 0 12 12"><g fill="none" stroke="#2a6fc0" stroke-width="1.3"><path d="M8.8 7 V10.2 a.6 .6 0 0 1 -.6 .6 H1.8 a.6 .6 0 0 1 -.6 -.6 V3.8 a.6 .6 0 0 1 .6 -.6 H5"/><path d="M5.2 6.8 L10.6 1.4"/></g><path d="M7 .6 H11.4 V5 Z" fill="#2a6fc0"/></svg>
<span class="t dl" style="top:612px;font-size:12px;color:#2a6fc0;left:667px;"><span class="u">ici</span></span>
<span class="t dl" style="top:612px;font-size:12px;color:#1d2126;left:681.5px;letter-spacing:-0.125px;">et copiez les dans le répertoire: media/com_hikaserial/ttf/</span>
<div class="a" style="left:35px;top:650px;width:1850px;height:28px;background:#fff;"></div>
<div class="a" style="left:35px;top:678px;width:1850px;height:1px;background:#c8ccd2;"></div>
<span class="t th" style="top:659px;font-size:12.8px;color:#212529;left:39px;font-weight:700;letter-spacing:-0.3px;">Type</span>
<span class="t th" style="top:659px;font-size:12.8px;color:#212529;left:504px;font-weight:700;letter-spacing:-0.3px;">Format</span>
<span class="t th" style="top:659px;font-size:12.8px;color:#212529;left:993px;font-weight:700;letter-spacing:-0.3px;">Position (X/Y)</span>
<span class="t th" style="top:659px;font-size:12.8px;color:#212529;left:1197.5px;font-weight:700;letter-spacing:-0.3px;">Taille (L/H)</span>
<span class="t th" style="top:659px;font-size:12.8px;color:#212529;left:1404px;font-weight:700;letter-spacing:-0.3px;">Taille &amp; Couleur</span>
<span class="t th" style="top:659px;font-size:12.8px;color:#212529;left:1580.5px;font-weight:700;letter-spacing:-0.3px;">Police</span>
<svg class="a" style="left:1852px;top:654px;" width="13" height="13" viewBox="0 0 13 13"><path d="M4.6 .8 H8.2 V4.6 H12 V8.2 H8.2 V12 H4.6 V8.2 H.8 V4.6 H4.6 Z" fill="#8fcf2f" stroke="#5f9f14" stroke-width=".9" stroke-linejoin="round"/></svg>
<div class="a" style="left:35px;top:679px;width:1850px;height:54px;background:#f2f2f2;"></div>
<div class="a" style="left:35px;top:733px;width:1850px;height:1px;background:#dcdfe3;"></div>
<span class="t td" style="top:687px;font-size:12.8px;color:#2b2f33;left:39px;letter-spacing:-0.2px;">Données du Serial</span>
<div class="a" style="left:504px;top:684px;width:265px;height:18px;background:#e9e9ed;border:1px solid #8f8f9d;border-radius:4px;"></div>
<span class="t st" style="top:687px;font-size:12.8px;color:#000;left:508.4px;">Brut</span>
<svg class="a" style="left:757px;top:690.5px;" width="7" height="5" viewBox="0 0 7 5"><path d="M.7 .8 L3.5 3.9 L6.3 .8" fill="none" stroke="#111" stroke-width="1.45"/></svg>
<span class="t td" style="top:689px;font-size:12.8px;color:#2b2f33;left:993px;">X :</span>
<div class="a" style="left:1010px;top:683px;width:75px;height:23px;background:#fff;border:1px solid #8a8a95;border-radius:2.5px;"></div>
<span class="t it" style="top:689px;font-size:12.8px;color:#000;left:1013.5px;">25</span>
<span class="t td" style="top:689px;font-size:12.8px;color:#2b2f33;left:1086px;">px</span>
<span class="t td" style="top:712px;font-size:12.8px;color:#2b2f33;left:993px;">Y :</span>
<div class="a" style="left:1010px;top:706px;width:75px;height:23px;background:#fff;border:1px solid #8a8a95;border-radius:2.5px;"></div>
<span class="t it" style="top:712px;font-size:12.8px;color:#000;left:1013.5px;">170</span>
<span class="t td" style="top:712px;font-size:12.8px;color:#2b2f33;left:1086px;">px</span>
<span class="t td" style="top:689px;font-size:12.8px;color:#2b2f33;left:1197.5px;">L :</span>
<div class="a" style="left:1214px;top:683px;width:75px;height:23px;background:#fff;border:1px solid #8a8a95;border-radius:2.5px;"></div>
<span class="t it" style="top:689px;font-size:12.8px;color:#000;left:1217.5px;">300</span>
<span class="t td" style="top:689px;font-size:12.8px;color:#2b2f33;left:1290px;">px</span>
<span class="t td" style="top:712px;font-size:12.8px;color:#2b2f33;left:1197.5px;">H :</span>
<div class="a" style="left:1216px;top:706px;width:75px;height:23px;background:#fff;border:1px solid #8a8a95;border-radius:2.5px;"></div>
<span class="t td" style="top:712px;font-size:12.8px;color:#2b2f33;left:1292px;">px</span>
<div class="a" style="left:1404px;top:683px;width:75px;height:23px;background:#fff;border:1px solid #8a8a95;border-radius:2.5px;"></div>
<span class="t it" style="top:689px;font-size:12.8px;color:#000;left:1407.5px;">60</span>
<span class="t td" style="top:689px;font-size:12.8px;color:#2b2f33;left:1480px;">px</span>
<span class="t td" style="top:712px;font-size:12.8px;color:#2b2f33;left:1404px;">#</span>
<div class="a" style="left:1411px;top:706px;width:76px;height:23px;background:#fff;border:1px solid #8a8a95;border-radius:2.5px;"></div>
<div class="a" style="left:1580px;top:684px;width:144px;height:18px;background:#e9e9ed;border:1px solid #8f8f9d;border-radius:4px;"></div>
<span class="t st" style="top:687px;font-size:12.8px;color:#000;left:1584.4px;">Hérité</span>
<svg class="a" style="left:1712px;top:690.5px;" width="7" height="5" viewBox="0 0 7 5"><path d="M.7 .8 L3.5 3.9 L6.3 .8" fill="none" stroke="#111" stroke-width="1.45"/></svg>
<div class="a" style="left:35px;top:734px;width:1850px;height:53px;background:#ffffff;"></div>
<div class="a" style="left:35px;top:787px;width:1850px;height:1px;background:#dcdfe3;"></div>
<div class="a" style="left:39px;top:738px;width:251px;height:19px;background:#e9e9ed;border:1px solid #8f8f9d;border-radius:4px;"></div>
<span class="t st" style="top:741px;font-size:12.8px;color:#000;left:43.4px;">Full product price (inc vat)</span>
<svg class="a" style="left:278px;top:745.0px;" width="7" height="5" viewBox="0 0 7 5"><path d="M.7 .8 L3.5 3.9 L6.3 .8" fill="none" stroke="#111" stroke-width="1.45"/></svg>
<div class="a" style="left:504px;top:738px;width:265px;height:19px;background:#e9e9ed;border:1px solid #8f8f9d;border-radius:4px;"></div>
<span class="t st" style="top:741px;font-size:12.8px;color:#000;left:508.4px;">Prix</span>
<svg class="a" style="left:757px;top:745.0px;" width="7" height="5" viewBox="0 0 7 5"><path d="M.7 .8 L3.5 3.9 L6.3 .8" fill="none" stroke="#111" stroke-width="1.45"/></svg>
<span class="t td" style="top:744px;font-size:12.8px;color:#2b2f33;left:993px;">X :</span>
<div class="a" style="left:1010px;top:738px;width:75px;height:23px;background:#fff;border:1px solid #8a8a95;border-radius:2.5px;"></div>
<span class="t it" style="top:744px;font-size:12.8px;color:#000;left:1013.5px;">1800</span>
<span class="t td" style="top:744px;font-size:12.8px;color:#2b2f33;left:1086px;">px</span>
<span class="t td" style="top:767px;font-size:12.8px;color:#2b2f33;left:993px;">Y :</span>
<div class="a" style="left:1010px;top:761px;width:75px;height:23px;background:#fff;border:1px solid #8a8a95;border-radius:2.5px;"></div>
<span class="t it" style="top:767px;font-size:12.8px;color:#000;left:1013.5px;">600</span>
<span class="t td" style="top:767px;font-size:12.8px;color:#2b2f33;left:1086px;">px</span>
<span class="t td" style="top:744px;font-size:12.8px;color:#2b2f33;left:1197.5px;">L :</span>
<div class="a" style="left:1214px;top:738px;width:75px;height:23px;background:#fff;border:1px solid #8a8a95;border-radius:2.5px;"></div>
<span class="t it" style="top:744px;font-size:12.8px;color:#000;left:1217.5px;">420</span>
<span class="t td" style="top:744px;font-size:12.8px;color:#2b2f33;left:1290px;">px</span>
<span class="t td" style="top:767px;font-size:12.8px;color:#2b2f33;left:1197.5px;">H :</span>
<div class="a" style="left:1216px;top:761px;width:75px;height:23px;background:#fff;border:1px solid #8a8a95;border-radius:2.5px;"></div>
<span class="t it" style="top:767px;font-size:12.8px;color:#000;left:1219.5px;">225</span>
<span class="t td" style="top:767px;font-size:12.8px;color:#2b2f33;left:1292px;">px</span>
<div class="a" style="left:1404px;top:738px;width:75px;height:23px;background:#fff;border:1px solid #8a8a95;border-radius:2.5px;"></div>
<span class="t it" style="top:744px;font-size:12.8px;color:#000;left:1407.5px;">180</span>
<span class="t td" style="top:744px;font-size:12.8px;color:#2b2f33;left:1480px;">px</span>
<span class="t td" style="top:767px;font-size:12.8px;color:#2b2f33;left:1404px;">#</span>
<div class="a" style="left:1411px;top:761px;width:76px;height:23px;background:#fff;border:1px solid #8a8a95;border-radius:2.5px;"></div>
<div class="a" style="left:1580px;top:738px;width:144px;height:19px;background:#e9e9ed;border:1px solid #8f8f9d;border-radius:4px;"></div>
<span class="t st" style="top:741px;font-size:12.8px;color:#000;left:1584.4px;">Hérité</span>
<svg class="a" style="left:1712px;top:745.0px;" width="7" height="5" viewBox="0 0 7 5"><path d="M.7 .8 L3.5 3.9 L6.3 .8" fill="none" stroke="#111" stroke-width="1.45"/></svg>
<svg class="a" style="left:1852.0px;top:739.5px;" width="13" height="11" viewBox="0 0 13 11"><ellipse cx="6.5" cy="5.5" rx="6.3" ry="5.3" fill="#111"/><path d="M4.4 3.4 L8.6 7.6 M8.6 3.4 L4.4 7.6" stroke="#fff" stroke-width="1.7"/></svg>
<div class="a" style="left:35px;top:788px;width:1850px;height:54px;background:#ececec;"></div>
<div class="a" style="left:35px;top:842px;width:1850px;height:1px;background:#dcdfe3;"></div>
<div class="a" style="left:39px;top:793px;width:251px;height:18px;background:#e9e9ed;border:1px solid #8f8f9d;border-radius:4px;"></div>
<span class="t st" style="top:797px;font-size:12.8px;color:#000;left:43.4px;">Texte brut...</span>
<svg class="a" style="left:278px;top:799.5px;" width="7" height="5" viewBox="0 0 7 5"><path d="M.7 .8 L3.5 3.9 L6.3 .8" fill="none" stroke="#111" stroke-width="1.45"/></svg>
<div class="a" style="left:504px;top:793px;width:265px;height:18px;background:#e9e9ed;border:1px solid #8f8f9d;border-radius:4px;"></div>
<span class="t st" style="top:797px;font-size:12.8px;color:#000;left:508.4px;">Brut</span>
<svg class="a" style="left:757px;top:799.5px;" width="7" height="5" viewBox="0 0 7 5"><path d="M.7 .8 L3.5 3.9 L6.3 .8" fill="none" stroke="#111" stroke-width="1.45"/></svg>
<span class="t td" style="top:798px;font-size:12.8px;color:#2b2f33;left:993px;">X :</span>
<div class="a" style="left:1010px;top:792px;width:75px;height:23px;background:#fff;border:1px solid #8a8a95;border-radius:2.5px;"></div>
<span class="t it" style="top:798px;font-size:12.8px;color:#000;left:1013.5px;">350</span>
<span class="t td" style="top:798px;font-size:12.8px;color:#2b2f33;left:1086px;">px</span>
<span class="t td" style="top:821px;font-size:12.8px;color:#2b2f33;left:993px;">Y :</span>
<div class="a" style="left:1010px;top:815px;width:75px;height:23px;background:#fff;border:1px solid #8a8a95;border-radius:2.5px;"></div>
<span class="t it" style="top:821px;font-size:12.8px;color:#000;left:1013.5px;">480</span>
<span class="t td" style="top:821px;font-size:12.8px;color:#2b2f33;left:1086px;">px</span>
<span class="t td" style="top:798px;font-size:12.8px;color:#2b2f33;left:1197.5px;">L :</span>
<div class="a" style="left:1214px;top:792px;width:75px;height:23px;background:#fff;border:1px solid #8a8a95;border-radius:2.5px;"></div>
<span class="t it" style="top:798px;font-size:12.8px;color:#000;left:1217.5px;">1200</span>
<span class="t td" style="top:798px;font-size:12.8px;color:#2b2f33;left:1290px;">px</span>
<span class="t td" style="top:821px;font-size:12.8px;color:#2b2f33;left:1197.5px;">H :</span>
<div class="a" style="left:1216px;top:815px;width:75px;height:23px;background:#fff;border:1px solid #8a8a95;border-radius:2.5px;"></div>
<span class="t it" style="top:821px;font-size:12.8px;color:#000;left:1219.5px;">450</span>
<span class="t td" style="top:821px;font-size:12.8px;color:#2b2f33;left:1292px;">px</span>
<div class="a" style="left:1404px;top:792px;width:75px;height:23px;background:#fff;border:1px solid #8a8a95;border-radius:2.5px;"></div>
<span class="t it" style="top:798px;font-size:12.8px;color:#000;left:1407.5px;">80</span>
<span class="t td" style="top:798px;font-size:12.8px;color:#2b2f33;left:1480px;">px</span>
<span class="t td" style="top:821px;font-size:12.8px;color:#2b2f33;left:1404px;">#</span>
<div class="a" style="left:1411px;top:815px;width:76px;height:23px;background:#fff;border:1px solid #8a8a95;border-radius:2.5px;"></div>
<div class="a" style="left:1580px;top:793px;width:144px;height:18px;background:#e9e9ed;border:1px solid #8f8f9d;border-radius:4px;"></div>
<span class="t st" style="top:797px;font-size:12.8px;color:#000;left:1584.4px;">Hérité</span>
<svg class="a" style="left:1712px;top:799.5px;" width="7" height="5" viewBox="0 0 7 5"><path d="M.7 .8 L3.5 3.9 L6.3 .8" fill="none" stroke="#111" stroke-width="1.45"/></svg>
<svg class="a" style="left:1852.0px;top:793.5px;" width="13" height="11" viewBox="0 0 13 11"><ellipse cx="6.5" cy="5.5" rx="6.3" ry="5.3" fill="#111"/><path d="M4.4 3.4 L8.6 7.6 M8.6 3.4 L4.4 7.6" stroke="#fff" stroke-width="1.7"/></svg>
<div class="a" style="left:35px;top:843px;width:1850px;height:54px;background:#ffffff;"></div>
<div class="a" style="left:35px;top:897px;width:1850px;height:1px;background:#dcdfe3;"></div>
<div class="a" style="left:39px;top:847px;width:251px;height:19px;background:#e9e9ed;border:1px solid #8f8f9d;border-radius:4px;"></div>
<span class="t st" style="top:851px;font-size:12.8px;color:#000;left:43.4px;">Données du Serial</span>
<svg class="a" style="left:278px;top:854.0px;" width="7" height="5" viewBox="0 0 7 5"><path d="M.7 .8 L3.5 3.9 L6.3 .8" fill="none" stroke="#111" stroke-width="1.45"/></svg>
<div class="a" style="left:504px;top:847px;width:265px;height:19px;background:#e9e9ed;border:1px solid #8f8f9d;border-radius:4px;"></div>
<span class="t st" style="top:851px;font-size:12.8px;color:#000;left:508.4px;">Date</span>
<svg class="a" style="left:757px;top:854.0px;" width="7" height="5" viewBox="0 0 7 5"><path d="M.7 .8 L3.5 3.9 L6.3 .8" fill="none" stroke="#111" stroke-width="1.45"/></svg>
<span class="t td" style="top:853px;font-size:12.8px;color:#2b2f33;left:993px;">X :</span>
<div class="a" style="left:1010px;top:847px;width:75px;height:23px;background:#fff;border:1px solid #8a8a95;border-radius:2.5px;"></div>
<span class="t td" style="top:853px;font-size:12.8px;color:#2b2f33;left:1086px;">px</span>
<span class="t td" style="top:876px;font-size:12.8px;color:#2b2f33;left:993px;">Y :</span>
<div class="a" style="left:1010px;top:870px;width:75px;height:23px;background:#fff;border:1px solid #8a8a95;border-radius:2.5px;"></div>
<span class="t td" style="top:876px;font-size:12.8px;color:#2b2f33;left:1086px;">px</span>
<span class="t td" style="top:853px;font-size:12.8px;color:#2b2f33;left:1197.5px;">L :</span>
<div class="a" style="left:1214px;top:847px;width:75px;height:23px;background:#fff;border:1px solid #8a8a95;border-radius:2.5px;"></div>
<span class="t td" style="top:853px;font-size:12.8px;color:#2b2f33;left:1290px;">px</span>
<span class="t td" style="top:876px;font-size:12.8px;color:#2b2f33;left:1197.5px;">H :</span>
<div class="a" style="left:1216px;top:870px;width:75px;height:23px;background:#fff;border:1px solid #8a8a95;border-radius:2.5px;"></div>
<span class="t td" style="top:876px;font-size:12.8px;color:#2b2f33;left:1292px;">px</span>
<div class="a" style="left:1404px;top:847px;width:75px;height:23px;background:#fff;border:1px solid #8a8a95;border-radius:2.5px;"></div>
<span class="t td" style="top:853px;font-size:12.8px;color:#2b2f33;left:1480px;">px</span>
<span class="t td" style="top:876px;font-size:12.8px;color:#2b2f33;left:1404px;">#</span>
<div class="a" style="left:1411px;top:870px;width:76px;height:23px;background:#fff;border:1px solid #8a8a95;border-radius:2.5px;"></div>
<div class="a" style="left:1580px;top:847px;width:144px;height:19px;background:#e9e9ed;border:1px solid #8f8f9d;border-radius:4px;"></div>
<span class="t st" style="top:851px;font-size:12.8px;color:#000;left:1584.4px;">Hérité</span>
<svg class="a" style="left:1712px;top:854.0px;" width="7" height="5" viewBox="0 0 7 5"><path d="M.7 .8 L3.5 3.9 L6.3 .8" fill="none" stroke="#111" stroke-width="1.45"/></svg>
<svg class="a" style="left:1852.0px;top:848.5px;" width="13" height="11" viewBox="0 0 13 11"><ellipse cx="6.5" cy="5.5" rx="6.3" ry="5.3" fill="#111"/><path d="M4.4 3.4 L8.6 7.6 M8.6 3.4 L4.4 7.6" stroke="#fff" stroke-width="1.7"/></svg>
<div class="a" style="left:39px;top:813px;width:234px;height:21px;background:#fff;border:1px solid #8a8a95;border-radius:2.5px;"></div>
<span class="t it" style="top:818px;font-size:12.8px;color:#000;left:42.5px;">{order.message}</span>
<div class="a" style="left:504px;top:866px;width:162px;height:23px;background:#fff;border:1px solid #8a8a95;border-radius:2.5px;"></div>
<div class="a" style="left:34px;top:921px;width:922px;height:140px;background:#fafafa;border:1px solid #d0d0d0;"></div>
<div class="a" style="left:35px;top:922px;width:920px;height:35px;background:#f0f0f0;"></div>
<span class="t pt" style="top:934px;font-size:12.4px;color:#495057;left:383px;font-weight:700;letter-spacing:-0.38px;">CHAMPS DANS LA BASE DE DONNÉES</span>
<span class="t fl" style="top:962px;font-size:12.8px;color:#343b4a;left:39px;font-weight:700;letter-spacing:-0.5px;">serial</span>
<span class="t fl" style="top:984px;font-size:12.8px;color:#343b4a;left:39px;font-weight:700;letter-spacing:-0.5px;">order</span>
<span class="t fl" style="top:1006px;font-size:12.8px;color:#343b4a;left:39px;font-weight:700;letter-spacing:-0.5px;">order_product</span>
<span class="t fl" style="top:1028px;font-size:12.8px;color:#343b4a;left:39px;font-weight:700;letter-spacing:-0.5px;">product</span>
<div class="a" style="left:0px;top:1032px;width:1920px;height:48px;background:linear-gradient(to right,#d6ebe5 0%,#cfeceb 25%,#c8edf0 55%,#c9eef1 100%);border-top:1px solid #aebfc0;"></div>
<svg class="a" style="left:19px;top:1046px;" width="24" height="17" viewBox="0 0 24 17"><defs><linearGradient id="cl" x1="0" y1="0" x2="0" y2="1"><stop offset="0" stop-color="#dfe8f7"/><stop offset="1" stop-color="#a9bfe8"/></linearGradient></defs><path d="M5.5 15.5 a4.5 4.5 0 0 1 .4 -9 a7 7 0 0 1 13 1.3 a4 4 0 0 1 -.4 7.7 Z" fill="url(#cl)" stroke="#9db4df" stroke-width=".6"/></svg>
<span class="t" style="top:1042px;font-size:12px;color:#15181a;left:50.5px;">-6°C</span>
<span class="t" style="top:1058px;font-size:12px;color:#5a6264;left:50.5px;">Nuageux</span>
<svg class="a" style="left:600.5px;top:1045px;" width="24" height="23" viewBox="0 0 24 23"><defs><linearGradient id="wg" x1="0" y1="0" x2="1" y2="1"><stop offset="0" stop-color="#3cc0f5"/><stop offset="1" stop-color="#0a6fd0"/></linearGradient></defs><g fill="url(#wg)"><rect x="0" y="0" width="11" height="10.5"/><rect x="12.5" y="0" width="11" height="10.5"/><rect x="0" y="12" width="11" height="10.5"/><rect x="12.5" y="12" width="11" height="10.5"/></g></svg>
<div class="a" style="left:639px;top:1041px;width:116px;height:31px;background:rgba(255,255,255,.62);border-radius:16px;border:1px solid rgba(255,255,255,.5);"></div>
<svg class="a" style="left:659px;top:1049px;" width="16" height="16" viewBox="0 0 16 16"><circle cx="6.7" cy="6.7" r="4.9" fill="none" stroke="#1b1b1b" stroke-width="1.4"/><path d="M10.3 10.3 L14.6 14.6" stroke="#1b1b1b" stroke-width="1.5" stroke-linecap="round"/></svg>
<span class="t" style="top:1052px;font-size:11.6px;color:#1d1d1d;left:679.5px;">Recherche</span>
<svg class="a" style="left:768px;top:1044px;" width="26" height="24" viewBox="0 0 26 24"><defs><linearGradient id="tv" x1="0" y1="0" x2="1" y2="1"><stop offset="0" stop-color="#fdfdfd"/><stop offset="1" stop-color="#cfd3d6"/></linearGradient></defs><rect x="7.5" y="1.5" width="17" height="15" rx="1.5" fill="url(#tv)" stroke="#e9ecee" stroke-width=".6"/><rect x="1" y="7" width="17" height="15" rx="1.5" fill="#2a2a2a"/><rect x="7.5" y="7" width="10.5" height="9.5" fill="#8f9497" opacity=".55"/></svg>
<svg class="a" style="left:813px;top:1044px;" width="24" height="24" viewBox="0 0 24 24"><ellipse cx="12" cy="12" rx="11.4" ry="11.6" fill="#e8202c"/><ellipse cx="12" cy="12" rx="5" ry="8.6" fill="#cfeceb"/><path d="M12 .4 a11.4 11.6 0 0 1 0 23.2 a9 11.6 0 0 0 0 -23.2" fill="#a70f1a" opacity=".55"/></svg>
<svg class="a" style="left:857px;top:1046px;" width="25" height="22" viewBox="0 0 25 22"><path d="M0 8 L12.5 0 L25 8 V21 H0 Z" fill="#1b7fd6"/><path d="M3 6 H22 V15 H3 Z" fill="#fff"/><path d="M0 8 L12.5 15.5 L25 8 V21 H0 Z" fill="#2d9bea"/><path d="M0 21 L12.5 13.5 L25 21 Z" fill="#1470c4"/></svg>
<div class="a" style="left:867.5px;top:1040px;width:21.5px;height:14.5px;background:#1f7c8f;border-radius:8px;"></div>
<span class="t" style="top:1042px;font-size:10.5px;color:#fff;left:871.5px;letter-spacing:-0.2px;">39</span>
<svg class="a" style="left:900px;top:1043px;" width="26" height="26" viewBox="0 0 26 26"><g stroke-linecap="round"><path d="M5 2 L10 11" stroke="#c2185b" stroke-width="2.2"/><path d="M9 1 L11.5 11" stroke="#e53935" stroke-width="2"/><path d="M13.5 .5 L13 11" stroke="#222" stroke-width="2.4"/><path d="M18 2 L15 11" stroke="#fbc02d" stroke-width="2"/><path d="M22 4 L17 12" stroke="#1e88e5" stroke-width="2.2"/><path d="M2.5 5 L8 12" stroke="#111" stroke-width="1.8"/><path d="M24 7 L19 13" stroke="#333" stroke-width="1.6"/></g><path d="M6 11 H20 L19 24 H7 Z" fill="#d9d9d9" stroke="#555" stroke-width="1"/><path d="M6 13.5 H20" stroke="#999" stroke-width="1.5"/></svg>
<svg class="a" style="left:944.5px;top:1044px;" width="25" height="25" viewBox="0 0 25 25"><defs><linearGradient id="eg1" x1="0" y1="0" x2="1" y2="1"><stop offset="0" stop-color="#35c1f1"/><stop offset="1" stop-color="#1667c7"/></linearGradient><linearGradient id="eg2" x1="0" y1="0" x2="1" y2="0"><stop offset="0" stop-color="#2fc6e0"/><stop offset="1" stop-color="#6ad94c"/></linearGradient></defs><circle cx="12.5" cy="12.5" r="12" fill="url(#eg1)"/><path d="M.8 11 A12 12 0 0 1 24.3 10.5 C24.5 15 21 17 17.5 16 C20 13 17 8.5 12.5 8.5 C7 8.5 2.5 12 .8 11 Z" fill="url(#eg2)"/><path d="M8.5 13.5 C8 18 11 22.5 17 23.5 A12 12 0 0 1 2 17 C3 13 6.5 12 8.5 13.5 Z" fill="#0f57b0"/><ellipse cx="13.3" cy="13.8" rx="4.2" ry="3.6" fill="#cfeceb"/></svg>
<svg class="a" style="left:988.5px;top:1043px;" width="24" height="25" viewBox="0 0 24 25"><path d="M7.5 6 V4 a4.5 4 0 0 1 9 0 V6" fill="none" stroke="#2aa4e8" stroke-width="1.7"/><rect x=".5" y="5.5" width="23" height="18.5" rx="3" fill="#1d4f9c"/><rect x=".5" y="5.5" width="23" height="5" rx="2" fill="#2463b8"/><rect x="6.8" y="11" width="4.8" height="4.8" fill="#f25022"/><rect x="12.6" y="11" width="4.8" height="4.8" fill="#7fba00"/><rect x="6.8" y="16.8" width="4.8" height="4.8" fill="#00a4ef"/><rect x="12.6" y="16.8" width="4.8" height="4.8" fill="#ffb900"/></svg>
<div class="a" style="left:1033px;top:1044px;width:24px;height:24px;background:#1f7f93;"></div>
<svg class="a" style="left:1036px;top:1047px;" width="18" height="18" viewBox="0 0 18 18"><circle cx="9" cy="9" r="5.6" fill="none" stroke="#35d3f5" stroke-width="2.2"/><path d="M6 13.8 L5.2 16 L8.4 14.6 Z" fill="#35d3f5"/></svg>
<div class="a" style="left:1070px;top:1037px;width:38px;height:38px;background:rgba(255,255,255,.5);border-radius:4px;border:1px solid rgba(255,255,255,.55);"></div>
<svg class="a" style="left:1077px;top:1043.5px;" width="24" height="25" viewBox="0 0 24 25"><defs><radialGradient id="ff1" cx=".7" cy=".2" r="1"><stop offset="0" stop-color="#ffe14a"/><stop offset=".45" stop-color="#ff8a16"/><stop offset="1" stop-color="#e31587"/></radialGradient><radialGradient id="ff2" cx=".4" cy=".4" r=".7"><stop offset="0" stop-color="#9059ff"/><stop offset="1" stop-color="#5b2bd8"/></radialGradient></defs><path d="M12 1.5 C15 3.5 16 5 16.3 6.5 C18.5 4.5 19 3 19 3 C23 7 24 11 23.5 14 A11.7 11.7 0 0 1 .3 13 C.3 9 2 6.5 3 5.5 C3 7 3.6 8 4.3 8.5 C5 5 8 2.5 12 1.5 Z" fill="url(#ff1)"/><circle cx="12" cy="13.5" r="5.6" fill="url(#ff2)"/><path d="M5 11 C7 8.5 10 8.5 12 10 C10 10.2 9 11.5 9.5 13 C10 15 13 15.5 15 14 C14.5 18 9 19.5 6 16.5 C4.5 15 4.3 12.8 5 11 Z" fill="#ff9a1f"/></svg>
<div class="a" style="left:1081px;top:1072px;width:15px;height:3px;background:#197a8c;border-radius:2px;"></div>
<div class="a" style="left:1121px;top:1044px;width:24px;height:24px;background:#ef443b;"></div>
<svg class="a" style="left:1124px;top:1049px;" width="18" height="14" viewBox="0 0 18 14"><path d="M5.5 2 L10.5 7 L5.5 12 L.5 7 Z" fill="#fff"/><path d="M9.8 .6 L16.2 7 L9.8 13.4 L8.3 11.9 L13.2 7 L8.3 2.1 Z" fill="#fff"/></svg>
<svg class="a" style="left:1165px;top:1044px;" width="25" height="24" viewBox="0 0 25 24"><path d="M0 3.5 a1.5 1.5 0 0 1 1.5 -1.5 H8 L10.5 4.5 H23 a1.5 1.5 0 0 1 1.5 1.5 V8 H0 Z" fill="#e8a417"/><rect x="0" y="6" width="24.5" height="17" rx="1.5" fill="#fdd24f"/><path d="M0 21.5 V23 H24.5 V21.5 Z" fill="#e9b52a"/><path d="M5 23 V17.5 a1.2 1.2 0 0 1 1.2 -1.2 H18.3 a1.2 1.2 0 0 1 1.2 1.2 V23 Z" fill="#1b7fd9"/><path d="M5 20.5 H19.5 V23 H5 Z" fill="#1565b8"/></svg>
<svg class="a" style="left:1209px;top:1044px;" width="24" height="24" viewBox="0 0 24 24"><rect x="0" y="0" width="24" height="24" rx="2.5" fill="#4b2a86"/><g fill="none" stroke="#e58cf7" stroke-width="1.5" stroke-linejoin="round"><path d="M14 2.5 L2.5 21.5 H21.5 V2.5 Z" fill="#c75fe8" fill-opacity=".85"/><path d="M8.5 21.5 L21.5 2.5 M21.5 12 L6.5 15 M14.5 21.5 L11 8"/></g></svg>
<div class="a" style="left:1245px;top:1036px;width:40px;height:39px;background:#fce4e6;border-radius:4px;"></div>
<svg class="a" style="left:1253px;top:1044px;" width="24" height="24" viewBox="0 0 24 24"><g transform="translate(12 12)"><g fill="#8fba4a"><rect x="-2.4" y="-11.6" width="4.8" height="6" rx=".8" transform="rotate(0)"/><rect x="-2.4" y="-11.6" width="4.8" height="6" rx=".8" transform="rotate(45)"/><rect x="-2.4" y="-11.6" width="4.8" height="6" rx=".8" transform="rotate(90)"/><rect x="-2.4" y="-11.6" width="4.8" height="6" rx=".8" transform="rotate(135)"/><rect x="-2.4" y="-11.6" width="4.8" height="6" rx=".8" transform="rotate(180)"/><rect x="-2.4" y="-11.6" width="4.8" height="6" rx=".8" transform="rotate(225)"/><rect x="-2.4" y="-11.6" width="4.8" height="6" rx=".8" transform="rotate(270)"/><rect x="-2.4" y="-11.6" width="4.8" height="6" rx=".8" transform="rotate(315)"/></g><circle r="8.6" fill="#8fba4a"/><circle r="3.9" fill="#fce4e6"/></g></svg>
<div class="a" style="left:1261.5px;top:1072px;width:6.5px;height:3px;background:#d3231c;border-radius:2px;"></div>
<div class="a" style="left:1297px;top:1044px;width:24px;height:24px;background:#5865f2;border-radius:50%;"></div>
<svg class="a" style="left:1301.5px;top:1050.5px;" width="15" height="12" viewBox="0 0 15 12"><path d="M2.6 1.3 C4 .6 5 .4 5.6 .3 L6 1.1 C7 1 8 1 9 1.1 L9.4 .3 C10 .4 11 .6 12.4 1.3 C14 4 14.8 7 14.5 10 C13.3 10.9 12 11.4 11 11.7 L10.2 10.4 C10.7 10.2 11.2 10 11.6 9.7 C9 10.9 6 10.9 3.4 9.7 C3.8 10 4.3 10.2 4.8 10.4 L4 11.7 C3 11.4 1.7 10.9 .5 10 C.2 7 1 4 2.6 1.3 Z" fill="#fff"/><ellipse cx="5.3" cy="6.4" rx="1.3" ry="1.5" fill="#5865f2"/><ellipse cx="9.7" cy="6.4" rx="1.3" ry="1.5" fill="#5865f2"/></svg>
<div class="a" style="left:1311px;top:1040px;width:15px;height:14px;background:#e8474c;border-radius:7px;"></div>
<span class="t" style="top:1043px;font-size:9.6px;color:#fff;left:1313.2px;font-weight:700;letter-spacing:-0.4px;">9+</span>
<div class="a" style="left:1306px;top:1072px;width:6px;height:3px;background:#7d8a8c;border-radius:2px;"></div>
<svg class="a" style="left:1687px;top:1051px;" width="14" height="9" viewBox="0 0 14 9"><path d="M1 7.8 L7 1.8 L13 7.8" fill="none" stroke="#1b1b1b" stroke-width="1.5"/></svg>
<svg class="a" style="left:1709.5px;top:1049.5px;" width="17" height="14" viewBox="0 0 17 14"><defs><linearGradient id="tc" x1="0" y1="0" x2="0" y2="1"><stop offset="0" stop-color="#f2f2f2"/><stop offset="1" stop-color="#7a7a7a"/></linearGradient></defs><path d="M4.2 10.6 a3.4 3.4 0 0 1 .2 -6.7 a4.8 4.8 0 0 1 9.2 .6 a3.1 3.1 0 0 1 -.2 6.1 Z" fill="url(#tc)" stroke="#1b1b1b" stroke-width="1.2"/><rect x="8" y="6.2" width="8" height="7.5" rx="1" fill="#fff"/><g fill="none" stroke="#1e63d8" stroke-width="1.3"><path d="M9.4 9.4 a2.7 2.7 0 0 1 4.8 -1.1"/><path d="M14.6 10.6 a2.7 2.7 0 0 1 -4.8 1.1"/></g><path d="M14.9 6.6 V9 H12.5 Z M9.1 13.4 V11 H11.5 Z" fill="#1e63d8"/></svg>
<svg class="a" style="left:1738px;top:1049.5px;" width="16" height="13" viewBox="0 0 16 13"><g fill="none" stroke="#1b1b1b" stroke-width="1.2" stroke-linecap="round"><path d="M1 4.6 a10 10 0 0 1 14 0"/><path d="M3.3 7.2 a6.7 6.7 0 0 1 9.4 0"/><path d="M5.6 9.7 a3.4 3.4 0 0 1 4.8 0"/></g><circle cx="8" cy="11.6" r="1.1" fill="#1b1b1b"/></svg>
<svg class="a" style="left:1761.5px;top:1050px;" width="16" height="12" viewBox="0 0 16 12"><path d="M.8 3.8 H3.6 L7 .8 V11.2 L3.6 8.2 H.8 Z" fill="none" stroke="#1b1b1b" stroke-width="1.1" stroke-linejoin="round"/><path d="M10.2 3.8 L14.6 8.2 M14.6 3.8 L10.2 8.2" stroke="#1b1b1b" stroke-width="1.1"/></svg>
<svg class="a" style="left:1786px;top:1051px;" width="17" height="10" viewBox="0 0 17 10"><rect x=".6" y=".6" width="13.6" height="8.8" rx="2" fill="none" stroke="#1b1b1b" stroke-width="1.2"/><path d="M15.2 3.3 V6.7" stroke="#1b1b1b" stroke-width="1.6" stroke-linecap="round"/><rect x="2.4" y="2.4" width="4.4" height="5.2" rx=".6" fill="#1b1b1b"/></svg>
<span class="t" style="top:1044px;font-size:11.8px;color:#15181a;right:43px;">09:40</span>
<span class="t" style="top:1059px;font-size:11.8px;color:#15181a;right:43px;">17/12/2022</span>
<div class="a" style="left:1884px;top:1048px;width:16px;height:16px;background:#1f6f80;border-radius:50%;"></div>
<span class="t" style="top:1051px;font-size:10.5px;color:#fff;left:1889.2px;font-weight:700;">3</span>
</body></html>
